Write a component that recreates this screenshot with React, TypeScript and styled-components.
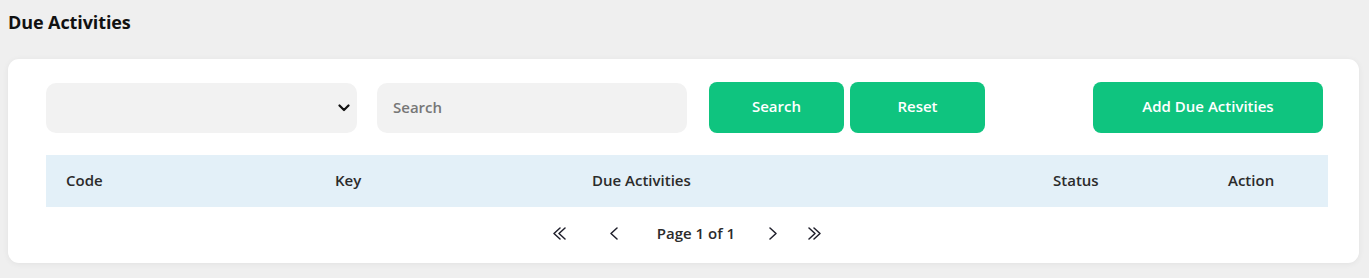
import React from "react";
import styled, { createGlobalStyle } from "styled-components";

const palette = {
    Page: "#efefef",
    White: "#ffffff",
    Field: "#f2f2f2",
    Green: "#0fc47f",
    HeaderBlue: "#e3f0f8",
    Text: "#2b2b2b",
    Placeholder: "#777777",
};

const GlobalStyle = createGlobalStyle`
    body {
        margin: 0;
        background: ${palette.Page};
        font-family: "Open Sans", "Noto Sans", sans-serif;
        color: ${palette.Text};
    }
`;

const columns = [
    { label: "Code", width: "269px" },
    { label: "Key", width: "257px" },
    { label: "Due Activities", width: "461px" },
    { label: "Status", width: "175px" },
    { label: "Action", width: "1fr" },
];

// thin chevrons drawn to match the pager arrows
const Chevron = ({ dir, double }: { dir: "left" | "right"; double?: boolean }) => {
    const w = double ? 13 : 8;
    const single = (x: number) =>
        dir === "left"
            ? `M${x + 7} 1 L${x + 1} 6.5 L${x + 7} 12`
            : `M${x + 1} 1 L${x + 7} 6.5 L${x + 1} 12`;
    return (
        <svg width={w} height="13" viewBox={`0 0 ${w} 13`}>
            <path d={single(0)} fill="none" stroke="#1f1f2b" strokeWidth="1.5" strokeLinecap="round" strokeLinejoin="round" />
            {double && <path d={single(5)} fill="none" stroke="#1f1f2b" strokeWidth="1.5" strokeLinecap="round" strokeLinejoin="round" />}
        </svg>
    );
};

const App = () => {
    return (
        <Page>
            <GlobalStyle />
            <Title>Due Activities</Title>
            <Card>
                <Toolbar>
                    <SelectBox>
                        <svg width="12" height="8" viewBox="0 0 12 8">
                            <path d="M1.5 1.5 L6 6 L10.5 1.5" fill="none" stroke="#111" strokeWidth="2.2" strokeLinecap="round" strokeLinejoin="round" />
                        </svg>
                    </SelectBox>
                    <SearchInput placeholder="Search" />
                    <GreenButton width="135px" gap="22px">Search</GreenButton>
                    <GreenButton width="135px" gap="6px">Reset</GreenButton>
                    <Spacer />
                    <GreenButton width="230px" gap="0">Add Due Activities</GreenButton>
                </Toolbar>
                <HeaderRow cols={columns.map((c) => c.width).join(" ")}>
                    {columns.map((c) => (
                        <HeaderCell key={c.label}>{c.label}</HeaderCell>
                    ))}
                </HeaderRow>
                <Pager>
                    <PagerButton after="44px"><Chevron dir="left" double /></PagerButton>
                    <PagerButton after="39px"><Chevron dir="left" /></PagerButton>
                    <PageLabel>Page 1 of 1</PageLabel>
                    <PagerButton before="34px" after="31px"><Chevron dir="right" /></PagerButton>
                    <PagerButton><Chevron dir="right" double /></PagerButton>
                </Pager>
            </Card>
        </Page>
    );
};

const Page = styled.div`
    padding: 10px 10px 14px 8px;
`;

const Title = styled.h1`
    margin: 0 0 24px;
    font-size: 18px;
    line-height: 25px;
    font-weight: 700;
    color: #111;
    letter-spacing: -0.1px;
`;

const Card = styled.div`
    background: ${palette.White};
    border-radius: 11px;
    box-shadow: 0 1px 6px rgba(0, 0, 0, 0.06);
    padding: 23px 31px 0 38px;
    height: 204px;
    box-sizing: border-box;
`;

const Toolbar = styled.div`
    display: flex;
    align-items: center;
    padding-right: 5px;
`;

const Field = styled.div`
    height: 50px;
    border-radius: 10px;
    background: ${palette.Field};
    box-sizing: border-box;
`;

const SelectBox = styled(Field)`
    width: 311px;
    display: flex;
    align-items: center;
    justify-content: flex-end;
    padding-right: 7px;
`;

const SearchInput = styled.input`
    width: 310px;
    height: 50px;
    margin-left: 20px;
    border: none;
    outline: none;
    border-radius: 10px;
    background: ${palette.Field};
    box-sizing: border-box;
    padding: 0 16px 2px;
    font-family: inherit;
    font-size: 15px;
    font-weight: 600;
    &::placeholder {
        color: ${palette.Placeholder};
    }
`;

const GreenButton = styled.button<{ width: string; gap: string }>`
    width: ${({ width }) => width};
    margin-left: ${({ gap }) => gap};
    height: 51px;
    padding: 0 0 3px;
    border: none;
    border-radius: 8px;
    background: ${palette.Green};
    color: ${palette.White};
    font-family: inherit;
    font-size: 15px;
    font-weight: 600;
    cursor: pointer;
`;

const Spacer = styled.div`
    flex: 1;
`;

const HeaderRow = styled.div<{ cols: string }>`
    display: grid;
    grid-template-columns: ${({ cols }) => cols};
    align-items: center;
    height: 52px;
    margin-top: 22px;
    padding-bottom: 3px;
    box-sizing: border-box;
    background: ${palette.HeaderBlue};
`;

const HeaderCell = styled.div`
    padding-left: 20px;
    font-size: 15px;
    font-weight: 600;
    color: ${palette.Text};
`;

const Pager = styled.div`
    display: flex;
    align-items: center;
    justify-content: center;
    height: 52px;
    color: ${palette.Text};
`;

const PagerButton = styled.span<{ before?: string; after?: string }>`
    display: inline-flex;
    margin-left: ${({ before }) => before || "0"};
    margin-right: ${({ after }) => after || "0"};
    cursor: pointer;
`;

const PageLabel = styled.span`
    font-size: 15px;
    font-weight: 600;
`;

export default App;
